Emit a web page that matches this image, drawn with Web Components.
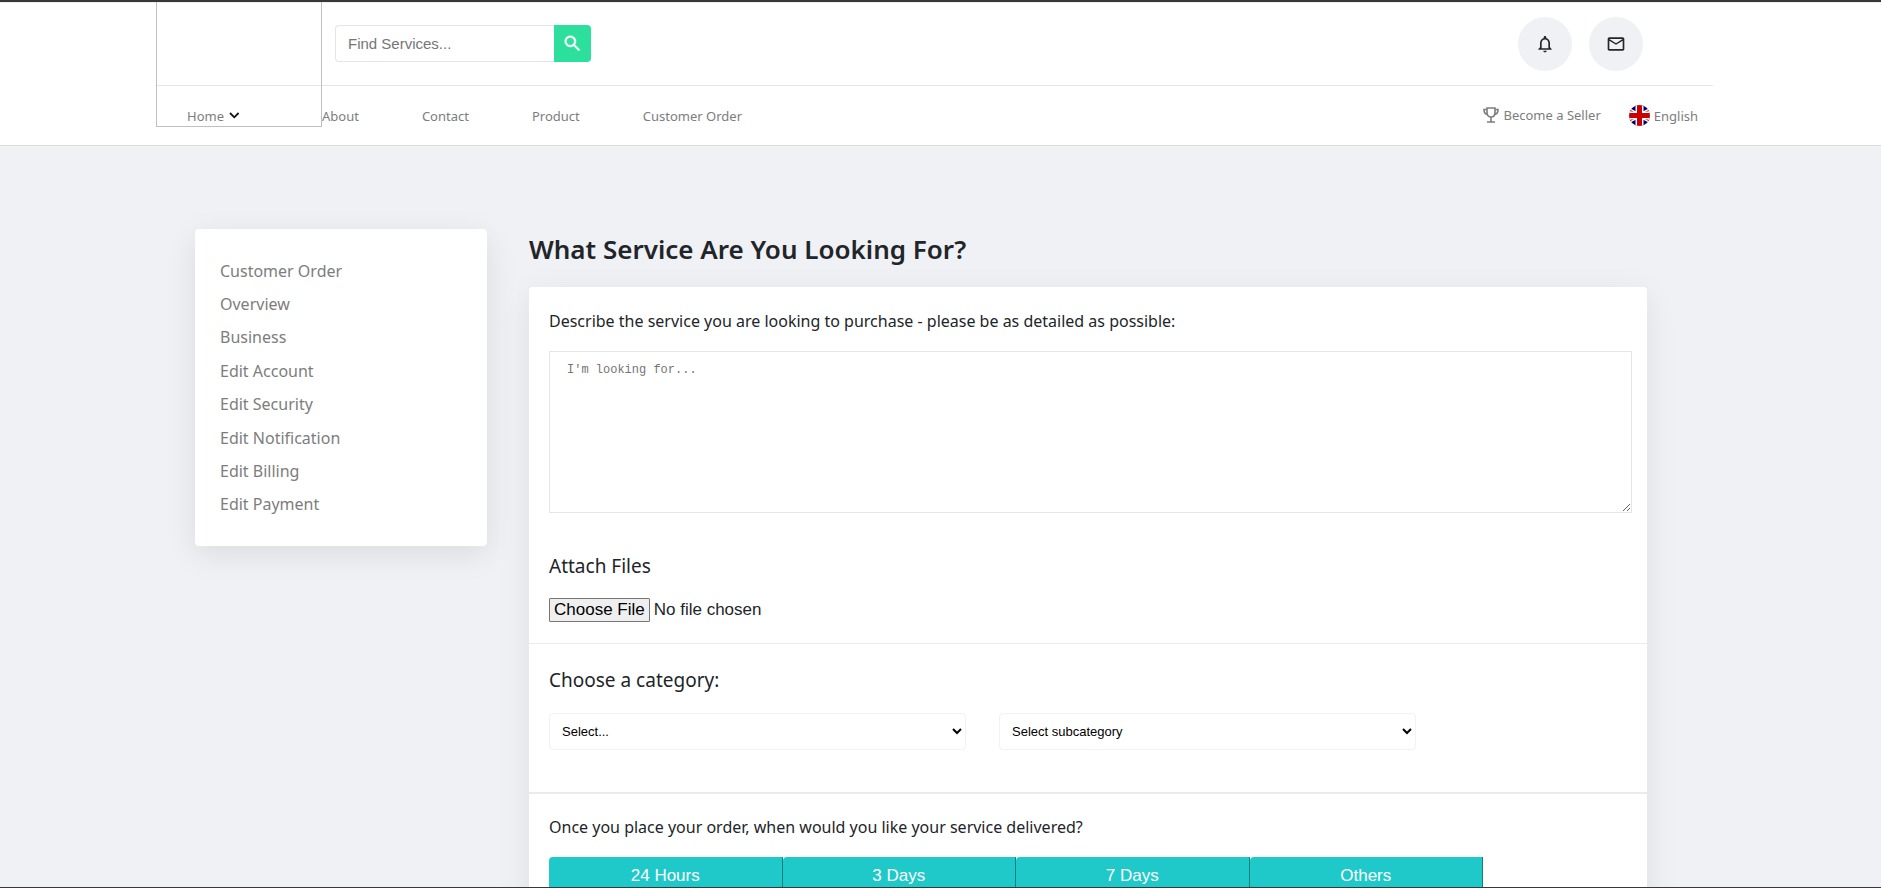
<!DOCTYPE html>
<html lang="en">
<head>
<meta charset="utf-8">
<title>What Service Are You Looking For?</title>
<style>
  html, body { margin: 0; height: 100%; }
  body { font-family: "Segoe UI", "Noto Sans", sans-serif; color: #212529; background: #f0f1f5; }
</style>
</head>
<body>
<market-page>
  <market-header slot="header">
    <search-box slot="search"></search-box>
    <round-button slot="tools" label="Notifications">
      <svg width="20" height="20" viewBox="0 0 24 24" fill="#222529"><path d="M12 22c1.100 0 2-.9 2-2h-4c0 1.100.9 2 2 2zm6-6v-5c0-3.070-1.630-5.640-4.500-6.320V4c0-.83-.67-1.500-1.500-1.500s-1.500.67-1.500 1.500v.68C7.640 5.360 6 7.920 6 11v5l-2 2v1h16v-1l-2-2zm-2 1H8v-6c0-2.480 1.510-4.500 4-4.500s4 2.020 4 4.500v6z"/></svg>
    </round-button>
    <round-button slot="tools" label="Messages">
      <svg width="20" height="20" viewBox="0 0 24 24" fill="#222529"><path d="M22 6c0-1.100-.9-2-2-2H4c-1.100 0-2 .9-2 2v12c0 1.100.9 2 2 2h16c1.100 0 2-.9 2-2V6zm-2 0l-8 5-8-5h16zm0 12H4V8l8 5 8-5v10z"/></svg>
    </round-button>
    <nav-link slot="home">Home
      <svg slot="after" width="12" height="7" viewBox="0 0 12 7" fill="none" stroke="#111" stroke-width="1.800"><path d="M2 1l4.300 4.300L10.600 1"/></svg>
    </nav-link>
    <nav-link slot="nav">About</nav-link>
    <nav-link slot="nav">Contact</nav-link>
    <nav-link slot="nav">Product</nav-link>
    <nav-link slot="nav">Customer Order</nav-link>
    <nav-link slot="extra">
      <svg slot="before" width="16" height="16" viewBox="0 0 16 16" fill="none" stroke="#7d7d7d" stroke-width="1.600"><path d="M4 1h8v4.500c0 2.500-1.500 4.500-4 4.500S4 8 4 5.500zM4 2.500H1c0 3 1 4.800 3.700 5M12 2.500h3c0 3-1 4.800-3.700 5M8 10v4.500M4 15h8"/></svg>
      Become a Seller</nav-link>
    <nav-link slot="extra">
      <svg slot="before" width="21" height="21" viewBox="0 0 21 21"><defs><clipPath id="disc"><circle cx="10.500" cy="10.500" r="10.500"/></clipPath></defs><g clip-path="url(#disc)"><path fill="#006" d="M0 0h21v21H0z"/><path stroke="#fff" stroke-width="4" d="M-4 3 25 18M-4 18 25 3"/><path stroke="#c00" stroke-width="1.300" d="M-4 3 25 18M-4 18 25 3"/><path stroke="#fff" stroke-width="8" d="M10.500 0v21M0 10.500h21"/><path stroke="#c00" stroke-width="5" d="M10.500 0v21M0 10.500h21"/></g></svg>
      English</nav-link>
  </market-header>
  <side-menu slot="aside"></side-menu>
  <service-request slot="main">
    <span slot="title">What Service Are You Looking For?</span>
    <delivery-option slot="delivery">24 Hours</delivery-option>
    <delivery-option slot="delivery">3 Days</delivery-option>
    <delivery-option slot="delivery">7 Days</delivery-option>
    <delivery-option slot="delivery">Others</delivery-option>
  </service-request>
</market-page>

<script>
const define = (name, html) => {
  const template = document.createElement('template');
  template.innerHTML = html;
  customElements.define(name, class extends HTMLElement {
    constructor() {
      super();
      this.attachShadow({ mode: 'open' }).append(template.content.cloneNode(true));
    }
    connectedCallback() {
      const label = this.getAttribute('label');
      if (label) this.shadowRoot.querySelector('button').setAttribute('aria-label', label);
    }
  });
};

define('market-page', `
<style>
  :host { display: block; box-sizing: border-box; height: 100vh; overflow: hidden;
    border-top: 2px solid #383838; border-bottom: 1px solid #383838; }
  .content { display: grid; grid-template-columns: 292px minmax(0, 1fr); gap: 42px;
    align-items: start; padding: 83px 234px 0 195px; }
</style>
<slot name="header"></slot>
<div class="content"><slot name="aside"></slot><slot name="main"></slot></div>`);

define('market-header', `
<style>
  :host { display: block; background: #fff; border-top: 1px solid #eee; border-bottom: 1px solid #dcdcdc; }
  .inner { position: relative; margin: 0 168px 0 156px; }
  .logo { position: absolute; left: 0; top: -1px; box-sizing: border-box; width: 166px; height: 125px;
    border: 1px solid silver; border-top: 0; }
  .top { display: flex; align-items: center; justify-content: space-between; height: 83px;
    box-sizing: border-box; padding: 0 70px 0 179px; border-bottom: 1px solid #e4e5e7; }
  .tools { display: flex; gap: 17px; }
  nav { display: flex; align-items: center; box-sizing: border-box; height: 59px; padding: 0 15px 0 31px; }
  .home { width: 135px; }
  .links { display: flex; gap: 63px; }
  .extra { display: flex; gap: 28px; margin-left: auto; }
</style>
<div class="inner">
  <a class="logo" href="#" aria-label="Homepage"></a>
  <div class="top"><slot name="search"></slot><div class="tools"><slot name="tools"></slot></div></div>
  <nav><div class="home"><slot name="home"></slot></div><div class="links"><slot name="nav"></slot></div>
  <div class="extra"><slot name="extra"></slot></div></nav>
</div>`);

define('search-box', `
<style>
  :host { display: block; padding-bottom: 2px; }
  form { display: flex; height: 37px; margin: 0; }
  input { box-sizing: border-box; width: 219px; padding: 0 12px; border: 1px solid #e4e5e7; border-right: 0;
    border-radius: 4px 0 0 4px; font: 15px "Liberation Sans", Arial, sans-serif; outline: 0; }
  input::placeholder { color: #757575; }
  button { display: grid; place-items: center; width: 37px; padding: 0; border: 0; border-radius: 0 4px 4px 0;
    background: #2ddf9c; }
</style>
<form><input type="text" placeholder="Find Services..." aria-label="Find Services">
<button type="button" aria-label="Search"><svg width="21" height="21" viewBox="0 0 24 24" fill="#fff" stroke="#fff" stroke-width=".5"><path d="M15.500 14h-.79l-.28-.27A6.471 6.471 0 0 0 16 9.500 6.500 6.500 0 1 0 9.500 16c1.610 0 3.090-.59 4.230-1.570l.27.28v.79l5 4.990L20.490 19l-4.990-5zm-6 0C7.010 14 5 11.990 5 9.500S7.010 5 9.500 5 14 7.010 14 9.500 11.990 14 9.500 14z"/></svg></button></form>`);

define('round-button', `
<style>
  :host { display: block; }
  button { display: grid; place-items: center; width: 54px; height: 54px; padding: 0; border: 0;
    border-radius: 50%; background: #f0f1f5; }
</style>
<button type="button"><slot></slot></button>`);

define('nav-link', `
<style>
  :host { display: block; }
  a { display: flex; align-items: center; gap: 4px; font-size: 13px; line-height: 20px; color: #7d7d7d;
    text-decoration: none; white-space: nowrap; }
</style>
<a href="#"><slot name="before"></slot><span><slot></slot></span><slot name="after"></slot></a>`);

define('side-menu', `
<style>
  :host { display: block; padding: 25px; background: #fff; border-radius: 4px;
    box-shadow: 0 8px 32px rgba(0, 0, 0, .09); }
  ul { display: grid; grid-auto-rows: 1fr; align-items: center; height: 267px; margin: 0; padding: 0; list-style: none; }
  a { font-size: 16px; line-height: 24px; color: #7d7d7d; text-decoration: none; }
</style>
<ul>
  <li><a href="#">Customer Order</a></li>
  <li><a href="#">Overview</a></li>
  <li><a href="#">Business</a></li>
  <li><a href="#">Edit Account</a></li>
  <li><a href="#">Edit Security</a></li>
  <li><a href="#">Edit Notification</a></li>
  <li><a href="#">Edit Billing</a></li>
  <li><a href="#">Edit Payment</a></li>
</ul>`);

define('delivery-option', `
<style>
  :host { display: block; flex: 1; }
  button { display: block; width: 100%; height: 38px; padding: 0; border: 0; border-right: 1px solid #14807f;
    border-radius: 4px 0 0 4px; background: #20c9c9; color: #fff; font: 17px "Liberation Sans", Arial, sans-serif; }
</style>
<button type="button"><slot></slot></button>`);

define('service-request', `
<style>
  :host { display: block; }
  h1 { margin: 0 0 18px; font-size: 26px; line-height: 40px; font-weight: 600; }
  .card { background: #fff; border-radius: 4px; box-shadow: 0 8px 32px rgba(0, 0, 0, .08); }
  section { padding: 20px 15px 20px 20px; border-bottom: 1px solid #ebebeb; }
  label, p, h2 { display: block; margin: 0; font-weight: 400; }
  .text { font-size: 16px; line-height: 28px; }
  .large { font-size: 19px; line-height: 32px; }
  textarea { display: block; box-sizing: border-box; width: 100%; height: 162px; margin: 16px 0 37px; padding: 10px 17px;
    border: 1px solid #e4e5e7; font: 12px/16px "Liberation Mono", monospace; resize: both; outline: 0; }
  textarea::placeholder { color: #757575; }
  input { display: block; height: 25px; margin-top: 16px; font: 17px/22px "Liberation Sans", Arial, sans-serif; }
  input::file-selector-button { box-sizing: border-box; height: 24px; padding: 0 4px; border: 1px solid #767676;
    border-radius: 1px; background: #efefef; color: #000; font: inherit; }
  .selects { display: grid; grid-template-columns: 417px 417px; gap: 33px; margin-top: 17px; }
  select { height: 37px; padding: 0 8px; border: 1px solid #f2f2f2; border-radius: 4px; background-color: #fff;
    color: #000; font: 13px "Liberation Sans", Arial, sans-serif; }
  .category { padding-bottom: 42px; border-bottom-width: 2px; }
  .delivery { padding-top: 19px; }
  .options { display: flex; margin: 16px 149px 0 0; }
</style>
<h1><slot name="title"></slot></h1>
<div class="card">
  <section>
    <label class="text" for="details">Describe the service you are looking to purchase - please be as detailed as possible:</label>
    <textarea id="details" placeholder="I'm looking for..."></textarea>
    <label class="large" for="files">Attach Files</label>
    <input id="files" type="file">
  </section>
  <section class="category">
    <h2 class="large">Choose a category:</h2>
    <div class="selects">
      <select aria-label="Category"><option>Select...</option></select>
      <select aria-label="Subcategory"><option>Select subcategory</option></select>
    </div>
  </section>
  <section class="delivery">
    <p class="text">Once you place your order, when would you like your service delivered?</p>
    <div class="options"><slot name="delivery"></slot></div>
  </section>
</div>`);
</script>
</body>
</html>
